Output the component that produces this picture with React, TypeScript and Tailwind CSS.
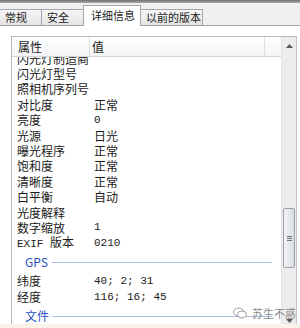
import React from 'react';

type Row = { name: React.ReactNode; value?: string; mono?: boolean };

const rows: Row[] = [
  { name: '闪光灯制造商' },
  { name: '闪光灯型号' },
  { name: '照相机序列号' },
  { name: '对比度', value: '正常' },
  { name: '亮度', value: '0', mono: true },
  { name: '光源', value: '日光' },
  { name: '曝光程序', value: '正常' },
  { name: '饱和度', value: '正常' },
  { name: '清晰度', value: '正常' },
  { name: '白平衡', value: '自动' },
  { name: '光度解释' },
  { name: '数字缩放', value: '1', mono: true },
  {
    name: (
      <>
        <span className="font-['Liberation_Mono',monospace] text-[11px]">EXIF </span>版本
      </>
    ),
    value: '0210',
    mono: true,
  },
];

const gpsRows: Row[] = [
  { name: '纬度', value: '40; 2; 31', mono: true },
  { name: '经度', value: '116; 16; 45', mono: true },
];

const PropRow = ({ row, h }: { row: Row; h: string }) => (
  <div className={`flex items-center ${h}`}>
    <div className="w-[78px] shrink-0 pl-[5px] whitespace-nowrap">{row.name}</div>
    <div
      className={`pl-[4px] whitespace-nowrap ${
        row.mono ? "font-['Liberation_Mono',monospace] text-[11px]" : ''
      }`}
    >
      {row.value}
    </div>
  </div>
);

const GroupHeader = ({ label }: { label: string }) => (
  <div className="flex items-center h-[22px] pl-[13px] pr-[9px]">
    <span className="text-[#2b4fc4]">{label}</span>
    <div className="flex-1 h-px bg-[#a9bde6] ml-[4px]" />
  </div>
);

const tab =
  'h-[16px] shrink-0 whitespace-nowrap border-t border-r border-[#a3a5ab] bg-gradient-to-b from-[#f6f6f6] to-[#e4e4e4] pt-[2px] text-[11px]';

export default function App() {
  return (
    <div className="w-[300px] h-[328px] overflow-hidden relative flex flex-col bg-[#f0f0f0] text-[12px] leading-none text-[#1b1b1b] font-['Noto_Sans_CJK_SC',sans-serif]">
      <div className="h-[3px] bg-gradient-to-b from-[#6f7074] to-[#a9abb0]" />

      {/* tabs */}
      <div className="flex items-end h-[22px] relative z-10">
        <div className={`${tab} w-[42px] pl-[5px]`}>常规</div>
        <div className={`${tab} w-[42px] pl-[5px]`}>安全</div>
        <div className="w-[58px] h-[21px] shrink-0 whitespace-nowrap -mb-px -ml-px border-t border-l border-r border-[#a3a5ab] bg-white pl-[7px] pt-[4px] text-[11px]">
          详细信息
        </div>
        <div className={`${tab} w-[62px] pl-[5px]`}>以前的版本</div>
      </div>

      {/* panel */}
      <div className="flex-1 min-h-0 bg-white border-t border-[#a3a5ab] pt-[10px] pl-[11px] pr-[3px]">
        <div className="h-full flex border-l border-t border-[#b6b9bf]">
          <div className="flex-1 min-w-0 flex flex-col">
            <div className="h-[20px] shrink-0 flex items-center border-b border-[#d6d6d6] bg-gradient-to-b from-white to-[#f3f4f6]">
              <div className="w-[78px] h-full flex items-center pl-[6px] border-r border-[#dedede]">属性</div>
              <div className="w-[175px] h-full flex items-center pl-[2px] border-r border-[#dedede]">值</div>
            </div>
            <div className="flex-1 min-h-0 overflow-hidden">
              <div className="-mt-[6px]">
                {rows.map((r, i) => (
                  <PropRow key={i} row={r} h="h-[15.4px]" />
                ))}
                <GroupHeader label="GPS" />
                {gpsRows.map((r, i) => (
                  <PropRow key={i} row={r} h="h-[16px]" />
                ))}
                <GroupHeader label="文件" />
              </div>
            </div>
          </div>

          {/* scrollbar */}
          <div className="w-[16px] shrink-0 flex flex-col bg-[#ececec] border-l border-[#e4e4e4] border-r border-r-[#c4c4c8]">
            <div className="h-[17px] flex items-center justify-center">
              <svg width="7" height="4" viewBox="0 0 7 4">
                <path d="M0 4 L3.5 0 L7 4 Z" fill="#5a5a5a" />
              </svg>
            </div>
            <div className="h-[154px]" />
            <div className="h-[60px] mx-px rounded-[2px] border border-[#9aa0a8] bg-gradient-to-r from-[#f2f3f5] to-[#d9dde2] flex items-center justify-center">
              <div className="flex flex-col gap-[1px]">
                <div className="w-[5px] h-px bg-[#6c727a]" />
                <div className="w-[5px] h-px bg-[#6c727a]" />
                <div className="w-[5px] h-px bg-[#6c727a]" />
              </div>
            </div>
            <div className="flex-1" />
            <div className="h-[6px] flex items-end justify-center pb-px">
              <svg width="7" height="4" viewBox="0 0 7 4">
                <path d="M0 0 L3.5 4 L7 0 Z" fill="#5a5a5a" />
              </svg>
            </div>
          </div>
        </div>
      </div>

      <div className="h-[4px] bg-[#fbf3ea]" />

      {/* watermark */}
      <div className="absolute left-[233px] top-[307px] flex items-center gap-[5px] text-[#8a8a8a] text-[11px]">
        <svg width="14" height="12" viewBox="0 0 14 12">
          <ellipse cx="5.5" cy="5" rx="5" ry="4" fill="none" stroke="#9a9a9a" strokeWidth="1" />
          <ellipse cx="9" cy="7.5" rx="4.3" ry="3.4" fill="white" stroke="#9a9a9a" strokeWidth="1" />
        </svg>
        <span>苏生不惑</span>
      </div>
    </div>
  );
}
